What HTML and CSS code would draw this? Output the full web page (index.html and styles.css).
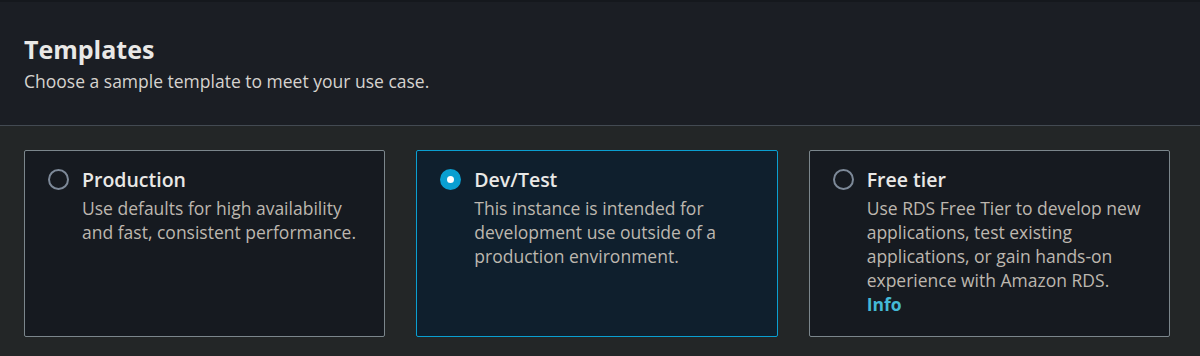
FILE: index.html
```
<!DOCTYPE html>
<html lang="en">
<head>
    <meta charset="UTF-8">
    <title>Templates</title>
    <link rel="stylesheet" href="styles.css">
</head>
<body>
    <div class="panel">
        <div class="header">
            <h2>Templates</h2>
            <p>Choose a sample template to meet your use case.</p>
        </div>
        <div class="tiles">
            <label class="tile">
                <span class="radio"></span>
                <span class="tile-text">
                    <span class="tile-title">Production</span>
                    <span class="tile-desc">Use defaults for high availability and fast, consistent performance.</span>
                </span>
            </label>
            <label class="tile selected">
                <span class="radio"></span>
                <span class="tile-text">
                    <span class="tile-title">Dev/Test</span>
                    <span class="tile-desc">This instance is intended for development use outside of a production environment.</span>
                </span>
            </label>
            <label class="tile">
                <span class="radio"></span>
                <span class="tile-text">
                    <span class="tile-title">Free tier</span>
                    <span class="tile-desc">Use RDS Free Tier to develop new applications, test existing applications, or gain hands-on experience with Amazon RDS.</span>
                    <a class="info" href="#">Info</a>
                </span>
            </label>
        </div>
    </div>
</body>
</html>
```

FILE: styles.css
```
body {
    margin: 0;
    background: #232627;
    font-family: "Open Sans", "Noto Sans", sans-serif;
    color: #e9e8e6;
}
.panel {
    border-top: 2px solid #15181d;
}
.header {
    background: #1b1e24;
    padding: 29px 24px 32px;
    border-bottom: 1px solid #434a52;
}
.header h2 {
    margin: 0;
    font-size: 25px;
    font-weight: 700;
    line-height: 36px;
}
.header p {
    margin: 2px 0 0;
    font-size: 17.5px;
    line-height: 24px;
    color: #d6d3cf;
}
.tiles {
    display: grid;
    grid-template-columns: repeat(3, 1fr);
    gap: 31px;
    padding: 24px 30px 19px 24px;
}
.tile {
    display: flex;
    gap: 13px;
    height: 187px;
    box-sizing: border-box;
    padding: 15px 16px 0 23px;
    background: #161a20;
    border: 1px solid #7b868c;
    border-radius: 2px;
}
.tile.selected {
    background: #0f1f2d;
    border-color: #0a9fd1;
}
.radio {
    flex: none;
    width: 21px;
    height: 21px;
    margin-top: 3px;
    box-sizing: border-box;
    border: 2px solid #7d8998;
    border-radius: 50%;
}
.selected .radio {
    border: 7px solid #0a9fd1;
    background: #fff;
}
.tile-text {
    display: flex;
    flex-direction: column;
}
.tile-title {
    font-size: 19.5px;
    font-weight: 600;
    line-height: 28px;
    color: #e9e8e6;
}
.tile-desc {
    margin-top: 2px;
    font-size: 17.5px;
    line-height: 24px;
    color: #bdb7af;
}
.info {
    font-size: 17.5px;
    line-height: 24px;
    font-weight: 700;
    color: #44b9d6;
    text-decoration: none;
}
```
